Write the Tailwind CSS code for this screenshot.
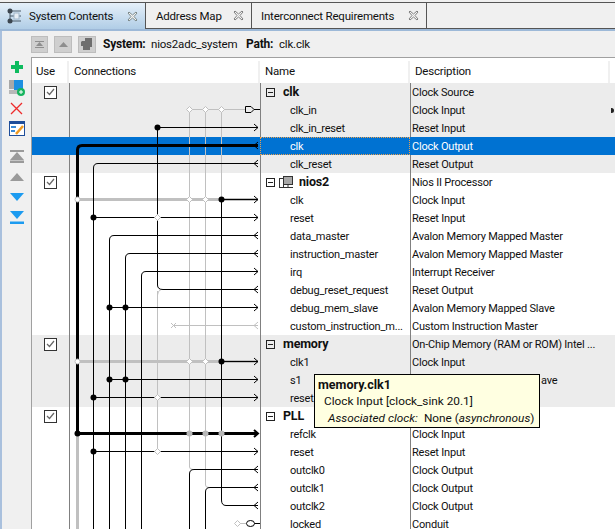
<!DOCTYPE html>
<html>
<head>
<title>System Contents</title>
<script src="https://cdn.jsdelivr.net/npm/@tailwindcss/browser@4"></script>
</head>
<body>
<div class="relative w-[615px] h-[529px] overflow-hidden bg-[#f0f0f0] text-[11px] tracking-[-0.2px] leading-[18px] text-[#101010] font-['Roboto','Open_Sans',sans-serif]">

  <!-- Tabs -->
  <div class="flex h-[31px] pt-[2px] border-b-2 border-[#9db9d8] whitespace-nowrap text-[11.5px]">
    <div class="flex items-center w-[146px] h-[27px] pl-[7px] bg-gradient-to-b from-[#e6f0f9] to-[#b0cde6] border-t border-r border-[#555]">
      <svg width="16" height="16" viewBox="0 0 16 16" class="shrink-0">
        <path d="M3 3V13M3 3H14M3 8H14M3 13H14" stroke="#4b5b68" fill="none"/>
        <circle cx="3" cy="3" r="2.500" fill="#3c4650"/><circle cx="3" cy="13" r="2.500" fill="#3c4650"/>
        <rect x="7" y="5" width="5" height="6" fill="#e8eef5" stroke="#9fb4c8"/>
      </svg>
      <span class="ml-[6px] w-[98px]">System Contents</span>
      <svg width="11" height="11" viewBox="0 0 11 11"><path d="M2 1 5.500 4 9 1 10 2 7 5.500 10 9 9 10 5.500 7 2 10 1 9 4 5.500 1 2Z" fill="#f4f4f4" stroke="#7d8a8a"/></svg>
    </div>
    <div class="flex items-center w-[106px] h-[27px] pl-[10px] border-t border-r border-b border-[#555]">
      <span class="w-[77px]">Address Map</span>
      <svg width="11" height="11" viewBox="0 0 11 11"><path d="M2 1 5.500 4 9 1 10 2 7 5.500 10 9 9 10 5.500 7 2 10 1 9 4 5.500 1 2Z" fill="#f4f4f4" stroke="#808080"/></svg>
    </div>
    <div class="flex items-center w-[175px] h-[27px] pl-[9px] border-t border-r border-b border-[#555]">
      <span class="w-[147px]">Interconnect Requirements</span>
      <svg width="11" height="11" viewBox="0 0 11 11"><path d="M2 1 5.500 4 9 1 10 2 7 5.500 10 9 9 10 5.500 7 2 10 1 9 4 5.500 1 2Z" fill="#f4f4f4" stroke="#808080"/></svg>
    </div>
    <div class="flex-1 border-t border-b border-[#555] h-[27px]"></div>
  </div>

  <div class="flex h-[498px] border-l-2 border-[#a9c0dd]">
    <!-- Left toolbar -->
    <div class="w-[29px] shrink-0 flex flex-col items-center pt-[29px]">
      <svg width="14" height="14" viewBox="0 0 14 14" class="ml-[1px]"><path d="M5 1H9V5H13V9H9V13H5V9H1V5H5Z" fill="#0dbb5e"/></svg>
      <svg width="18" height="18" viewBox="0 0 18 18" class="mt-[5px]">
        <rect x="1" y="1" width="5" height="9" fill="#a8a8a8"/><rect x="1" y="11" width="11" height="4" fill="#b8b8b8"/>
        <rect x="6" y="1" width="9" height="10" fill="#1d8fe0"/>
        <circle cx="13" cy="13" r="4" fill="#17b45e"/><path d="M11 13H15M13 11V15" stroke="#fff"/>
      </svg>
      <svg width="13" height="13" viewBox="0 0 13 13" class="mt-[5px]"><path d="M1 1 12 12M12 1 1 12" stroke="#ee2a2a" stroke-width="1.300"/></svg>
      <svg width="16" height="15" viewBox="0 0 16 15" class="mt-[6px]">
        <rect x="0.500" y="0.500" width="15" height="14" fill="#fff" stroke="#1f4e9a"/><rect x="0" y="0" width="16" height="3" fill="#1f4e9a"/>
        <path d="M2 6H7M2 10H6" stroke="#3a8ad6" stroke-width="2"/>
        <path d="M7 13 14 5" stroke="#f09a20" stroke-width="2.500"/>
      </svg>
      <svg width="14" height="13" viewBox="0 0 14 13" class="mt-[14px]"><path d="M0 0H14V2H0ZM7 2 14 10H0ZM0 10.500H14V13H0Z" fill="#9a9a9a"/></svg>
      <svg width="14" height="8" viewBox="0 0 14 8" class="mt-[10px]"><path d="M7 0 14 8H0Z" fill="#9a9a9a"/></svg>
      <svg width="14" height="8" viewBox="0 0 14 8" class="mt-[12px]"><path d="M0 0H14L7 8Z" fill="#1c9bf0"/></svg>
      <svg width="14" height="13" viewBox="0 0 14 13" class="mt-[10px]"><path d="M0 0H14L7 8ZM0 10.500H14V13H0Z" fill="#1c9bf0"/></svg>
    </div>

    <!-- Main -->
    <div class="flex-1 min-w-0">
      <!-- Path bar -->
      <div class="flex items-center h-[26px] whitespace-nowrap">
        <div class="w-[17px] h-[17px] flex items-center justify-center bg-[#cfcfcf] border border-[#bdbdbd]"><svg width="9" height="7" viewBox="0 0 9 7"><path d="M0 0H9V1H0ZM4.500 1 8 5H1ZM0 6H9V7H0Z" fill="#8e8e8e"/></svg></div>
        <div class="w-[18px] h-[17px] ml-[6px] flex items-center justify-center bg-[#cfcfcf] border border-[#bdbdbd]"><svg width="9" height="5" viewBox="0 0 9 5"><path d="M4.500 0 9 5H0Z" fill="#8e8e8e"/></svg></div>
        <div class="w-[18px] h-[17px] ml-[6px] flex items-center justify-center bg-[#cfcfcf] border border-[#bdbdbd]"><svg width="14" height="14" viewBox="0 0 14 14"><path d="M2 4H5V1H12V10H10V13H3V9H1V5Z" fill="#6e6e6e"/></svg></div>
        <span class="ml-[5px] w-[50px] font-bold text-[12px] pl-[2px]">System:</span>
        <span class="w-[95px] text-[11.5px]">nios2adc_system</span>
        <span class="w-[33px] font-bold text-[12px]">Path:</span>
        <span class="text-[11.5px]">clk.clk</span>
      </div>

      <!-- Table -->
      <div class="relative border-t border-l border-[#a0a0a0] leading-[20px]">
        <div class="flex h-[25px] bg-white pt-[3px] text-[11.5px]">
          <div class="w-[37px] pl-[4px] border-r-2 border-[#f0f0f0]">Use</div>
          <div class="w-[191px] pl-[5px] border-r-2 border-[#f0f0f0]">Connections</div>
          <div class="w-[150px] pl-[5px] border-r-2 border-[#f0f0f0]">Name</div>
          <div class="w-[200px] pl-[5px] border-r-2 border-[#f0f0f0]">Description</div>
        </div>

        <div class="relative">
          <!-- clk group -->
          <div class="bg-[#ececec]">
            <div class="flex h-[18px]">
              <div class="w-[37px] flex justify-center items-center"><span class="w-[13px] h-[13px] border border-[#333] bg-white flex items-center justify-center"><svg width="9" height="8" viewBox="0 0 9 8"><path d="M1 4 3.500 6.500 8 1" stroke="#666" stroke-width="1.200" fill="none"/></svg></span></div>
              <div class="w-[191px] border-l border-[#808080]"></div>
              <div class="w-[150px] border-l border-[#808080] flex items-center pl-[5px]"><span class="w-[9px] h-[9px] border border-[#222] flex items-center justify-center"><span class="w-[5px] h-px bg-[#222]"></span></span><span class="ml-[8px] font-bold text-[12.5px]">clk</span></div>
              <div class="w-[200px] border-l border-[#808080] pl-px">Clock Source</div>
            </div>
            <div class="flex h-[18px]"><div class="w-[37px]"></div><div class="w-[191px] border-l border-[#808080]"></div><div class="w-[150px] border-l border-[#808080] pl-[29px]">clk_in</div><div class="w-[200px] border-l border-[#808080] pl-px">Clock Input</div></div>
            <div class="flex h-[18px]"><div class="w-[37px]"></div><div class="w-[191px] border-l border-[#808080]"></div><div class="w-[150px] border-l border-[#808080] pl-[29px]">clk_in_reset</div><div class="w-[200px] border-l border-[#808080] pl-px">Reset Input</div></div>
            <div class="flex h-[18px] bg-[#0072d2] text-white"><div class="w-[37px]"></div><div class="w-[191px]"></div><div class="w-[150px] border border-dotted border-[#e8a050] pl-[29px] leading-[18px]">clk</div><div class="w-[200px] pl-[2px]">Clock Output</div></div>
            <div class="flex h-[18px]"><div class="w-[37px]"></div><div class="w-[191px] border-l border-[#808080]"></div><div class="w-[150px] border-l border-[#808080] pl-[29px]">clk_reset</div><div class="w-[200px] border-l border-[#808080] pl-px">Reset Output</div></div>
          </div>

          <!-- nios2 group -->
          <div class="bg-white">
            <div class="flex h-[18px]">
              <div class="w-[37px] flex justify-center items-center"><span class="w-[13px] h-[13px] border border-[#333] bg-white flex items-center justify-center"><svg width="9" height="8" viewBox="0 0 9 8"><path d="M1 4 3.500 6.500 8 1" stroke="#666" stroke-width="1.200" fill="none"/></svg></span></div>
              <div class="w-[191px] border-l border-[#808080]"></div>
              <div class="w-[150px] border-l border-[#808080] flex items-center pl-[5px]"><span class="w-[9px] h-[9px] border border-[#222] flex items-center justify-center"><span class="w-[5px] h-px bg-[#222]"></span></span><svg width="15" height="15" viewBox="0 0 15 15" class="ml-[4px]"><rect x="0.500" y="3.500" width="4" height="9" fill="#fff" stroke="#333"/><rect x="4.500" y="1.500" width="9" height="8" fill="#a8a8a8" stroke="#333"/><path d="M9 10V12M5 12.500H14" stroke="#333"/></svg><span class="ml-[5px] font-bold text-[12.5px]">nios2</span></div>
              <div class="w-[200px] border-l border-[#808080] pl-px">Nios II Processor</div>
            </div>
            <div class="flex h-[18px]"><div class="w-[37px]"></div><div class="w-[191px] border-l border-[#808080]"></div><div class="w-[150px] border-l border-[#808080] pl-[29px]">clk</div><div class="w-[200px] border-l border-[#808080] pl-px">Clock Input</div></div>
            <div class="flex h-[18px]"><div class="w-[37px]"></div><div class="w-[191px] border-l border-[#808080]"></div><div class="w-[150px] border-l border-[#808080] pl-[29px]">reset</div><div class="w-[200px] border-l border-[#808080] pl-px">Reset Input</div></div>
            <div class="flex h-[18px]"><div class="w-[37px]"></div><div class="w-[191px] border-l border-[#808080]"></div><div class="w-[150px] border-l border-[#808080] pl-[29px]">data_master</div><div class="w-[200px] border-l border-[#808080] pl-px">Avalon Memory Mapped Master</div></div>
            <div class="flex h-[18px]"><div class="w-[37px]"></div><div class="w-[191px] border-l border-[#808080]"></div><div class="w-[150px] border-l border-[#808080] pl-[29px]">instruction_master</div><div class="w-[200px] border-l border-[#808080] pl-px">Avalon Memory Mapped Master</div></div>
            <div class="flex h-[18px]"><div class="w-[37px]"></div><div class="w-[191px] border-l border-[#808080]"></div><div class="w-[150px] border-l border-[#808080] pl-[29px]">irq</div><div class="w-[200px] border-l border-[#808080] pl-px">Interrupt Receiver</div></div>
            <div class="flex h-[18px]"><div class="w-[37px]"></div><div class="w-[191px] border-l border-[#808080]"></div><div class="w-[150px] border-l border-[#808080] pl-[29px]">debug_reset_request</div><div class="w-[200px] border-l border-[#808080] pl-px">Reset Output</div></div>
            <div class="flex h-[18px]"><div class="w-[37px]"></div><div class="w-[191px] border-l border-[#808080]"></div><div class="w-[150px] border-l border-[#808080] pl-[29px]">debug_mem_slave</div><div class="w-[200px] border-l border-[#808080] pl-px">Avalon Memory Mapped Slave</div></div>
            <div class="flex h-[18px]"><div class="w-[37px]"></div><div class="w-[191px] border-l border-[#808080]"></div><div class="w-[150px] border-l border-[#808080] pl-[29px] whitespace-nowrap">custom_instruction_m...</div><div class="w-[200px] border-l border-[#808080] pl-px">Custom Instruction Master</div></div>
          </div>

          <!-- memory group -->
          <div class="bg-[#ececec]">
            <div class="flex h-[18px]">
              <div class="w-[37px] flex justify-center items-center"><span class="w-[13px] h-[13px] border border-[#333] bg-white flex items-center justify-center"><svg width="9" height="8" viewBox="0 0 9 8"><path d="M1 4 3.500 6.500 8 1" stroke="#666" stroke-width="1.200" fill="none"/></svg></span></div>
              <div class="w-[191px] border-l border-[#808080]"></div>
              <div class="w-[150px] border-l border-[#808080] flex items-center pl-[5px]"><span class="w-[9px] h-[9px] border border-[#222] flex items-center justify-center"><span class="w-[5px] h-px bg-[#222]"></span></span><span class="ml-[8px] font-bold text-[12.5px]">memory</span></div>
              <div class="w-[200px] border-l border-[#808080] pl-px whitespace-nowrap">On-Chip Memory (RAM or ROM) Intel ...</div>
            </div>
            <div class="flex h-[18px]"><div class="w-[37px]"></div><div class="w-[191px] border-l border-[#808080]"></div><div class="w-[150px] border-l border-[#808080] pl-[29px]">clk1</div><div class="w-[200px] border-l border-[#808080] pl-px">Clock Input</div></div>
            <div class="flex h-[18px]"><div class="w-[37px]"></div><div class="w-[191px] border-l border-[#808080]"></div><div class="w-[150px] border-l border-[#808080] pl-[29px]">s1</div><div class="w-[200px] border-l border-[#808080] pl-[130px] whitespace-nowrap">ave</div></div>
            <div class="flex h-[18px]"><div class="w-[37px]"></div><div class="w-[191px] border-l border-[#808080]"></div><div class="w-[150px] border-l border-[#808080] pl-[29px]">reset</div><div class="w-[200px] border-l border-[#808080]"></div></div>
          </div>

          <!-- PLL group -->
          <div class="bg-white">
            <div class="flex h-[18px]">
              <div class="w-[37px] flex justify-center items-center"><span class="w-[13px] h-[13px] border border-[#333] bg-white flex items-center justify-center"><svg width="9" height="8" viewBox="0 0 9 8"><path d="M1 4 3.500 6.500 8 1" stroke="#666" stroke-width="1.200" fill="none"/></svg></span></div>
              <div class="w-[191px] border-l border-[#808080]"></div>
              <div class="w-[150px] border-l border-[#808080] flex items-center pl-[5px]"><span class="w-[9px] h-[9px] border border-[#222] flex items-center justify-center"><span class="w-[5px] h-px bg-[#222]"></span></span><span class="ml-[8px] font-bold text-[12.5px]">PLL</span></div>
              <div class="w-[200px] border-l border-[#808080]"></div>
            </div>
            <div class="flex h-[18px]"><div class="w-[37px]"></div><div class="w-[191px] border-l border-[#808080]"></div><div class="w-[150px] border-l border-[#808080] pl-[29px]">refclk</div><div class="w-[200px] border-l border-[#808080] pl-px">Clock Input</div></div>
            <div class="flex h-[18px]"><div class="w-[37px]"></div><div class="w-[191px] border-l border-[#808080]"></div><div class="w-[150px] border-l border-[#808080] pl-[29px]">reset</div><div class="w-[200px] border-l border-[#808080] pl-px">Reset Input</div></div>
            <div class="flex h-[18px]"><div class="w-[37px]"></div><div class="w-[191px] border-l border-[#808080]"></div><div class="w-[150px] border-l border-[#808080] pl-[29px]">outclk0</div><div class="w-[200px] border-l border-[#808080] pl-px">Clock Output</div></div>
            <div class="flex h-[18px]"><div class="w-[37px]"></div><div class="w-[191px] border-l border-[#808080]"></div><div class="w-[150px] border-l border-[#808080] pl-[29px]">outclk1</div><div class="w-[200px] border-l border-[#808080] pl-px">Clock Output</div></div>
            <div class="flex h-[18px]"><div class="w-[37px]"></div><div class="w-[191px] border-l border-[#808080]"></div><div class="w-[150px] border-l border-[#808080] pl-[29px]">outclk2</div><div class="w-[200px] border-l border-[#808080] pl-px">Clock Output</div></div>
            <div class="flex h-[18px]"><div class="w-[37px]"></div><div class="w-[191px] border-l border-[#808080]"></div><div class="w-[150px] border-l border-[#808080] pl-[29px]">locked</div><div class="w-[200px] border-l border-[#808080] pl-px">Conduit</div></div>
          </div>

          <!-- connection wires, coordinates are page pixels -->
          <svg class="absolute left-[37px] top-0" width="192" height="450" viewBox="69 83 192 450" fill="none">
            <!-- gray wires -->
            <g stroke="#c0c0c0">
              <path d="M189.500 109.500V467Q189.500 469.500 193 469.500M205.500 109.500V485Q205.500 487.500 209 487.500M221.500 109.500V199.500M157.500 291V451.500"/>
              <path d="M189.500 109.500H245"/>
              <path d="M77.500 199.500H258M77.500 361.500H258M77.500 433.500V529" stroke-width="3"/>
              <path d="M157.500 295Q157.500 291 161 289.500"/>
              <path d="M173.500 325.500H258M258 322 254 325.500 258 329"/>
              <path d="M171 323 176 328M176 323 171 328" />
            </g>
            <!-- black wires -->
            <g stroke="#000">
              <path d="M157.500 127.500V285Q157.500 289.500 163 289.500H258"/>
              <path d="M157.500 127.500H258M93.500 529V168Q93.500 163.500 98 163.500H258"/>
              <path d="M109.500 529V240Q109.500 235.500 114 235.500H258M125.500 529V258Q125.500 253.500 130 253.500H258M141.500 529V276Q141.500 271.500 146 271.500H258"/>
              <path d="M221.500 199.500V500Q221.500 505.500 226 505.500H258"/>
              <path d="M221.500 199.500H258M221.500 361.500H258M93.500 217.500H258M93.500 397.500H258M93.500 451.500H258M109.500 307.500H258M109.500 379.500H258"/>
              <path d="M189.500 529V474Q189.500 469.500 194 469.500H258M205.500 529V492Q205.500 487.500 210 487.500H258"/>
              <path d="M77.500 433.500H258" stroke-width="3"/>
              <path d="M77.500 433.500V150Q77.500 145.500 82 145.500H258" stroke-width="3"/>
              <!-- arrows in -->
              <path d="M258 142 254 145.500 258 149M258 160 254 163.500 258 167M258 232 254 235.500 258 239M258 250 254 253.500 258 257M258 286 254 289.500 258 293M258 466 254 469.500 258 473M258 484 254 487.500 258 491M258 502 254 505.500 258 509"/>
              <!-- arrows out -->
              <path d="M254 124 258 127.500 254 131M254 196 258 199.500 254 203M254 214 258 217.500 254 221M254 268 258 271.500 254 275M254 304 258 307.500 254 311M254 358 258 361.500 254 365M254 376 258 379.500 254 383M254 394 258 397.500 254 401M254 448 258 451.500 254 455"/>
              <path d="M254 430 258 433.500 254 437" stroke-width="2"/>
              <!-- clock source -->
              <path d="M245.500 106.500H251L254 109.500 251 112.500H245.500ZM254 109.500H260"/>
              <!-- locked conduit -->
              <ellipse cx="250.500" cy="523.500" rx="4" ry="3"/>
              <path d="M254.500 523.500H260"/>
            </g>
            <path d="M238 523.500H246" stroke="#c0c0c0"/>
            <!-- black junction dots -->
            <g fill="#000">
              <circle cx="157.500" cy="127.500" r="3"/><circle cx="221.500" cy="199.500" r="3"/><circle cx="93.500" cy="217.500" r="3"/>
              <circle cx="109.500" cy="307.500" r="3"/><circle cx="125.500" cy="307.500" r="3"/><circle cx="221.500" cy="361.500" r="3"/>
              <circle cx="109.500" cy="379.500" r="3"/><circle cx="125.500" cy="379.500" r="3"/><circle cx="93.500" cy="397.500" r="3"/>
              <circle cx="77.500" cy="433.500" r="3"/><circle cx="93.500" cy="451.500" r="3"/>
            </g>
            <!-- gray junction diamonds -->
            <g fill="#fff" stroke="#c0c0c0">
              <path d="M189.500 106.500 192.500 109.500 189.500 112.500 186.500 109.500ZM205.500 106.500 208.500 109.500 205.500 112.500 202.500 109.500ZM221.500 106.500 224.500 109.500 221.500 112.500 218.500 109.500Z"/>
              <path d="M189.500 196.500 192.500 199.500 189.500 202.500 186.500 199.500ZM205.500 196.500 208.500 199.500 205.500 202.500 202.500 199.500ZM157.500 214.500 160.500 217.500 157.500 220.500 154.500 217.500Z"/>
              <path d="M189.500 358.500 192.500 361.500 189.500 364.500 186.500 361.500ZM205.500 358.500 208.500 361.500 205.500 364.500 202.500 361.500ZM157.500 394.500 160.500 397.500 157.500 400.500 154.500 397.500Z"/>
              <path d="M157.500 448.500 160.500 451.500 157.500 454.500 154.500 451.500ZM237.500 520.500 240.500 523.500 237.500 526.500 234.500 523.500Z"/>
              <circle cx="77.500" cy="199.500" r="2.500"/><circle cx="77.500" cy="361.500" r="2.500"/>
            </g>
            <g fill="#b8b8b8"><circle cx="189.500" cy="433.500" r="3"/><circle cx="205.500" cy="433.500" r="3"/><circle cx="221.500" cy="433.500" r="3"/></g>
          </svg>
        </div>
      </div>
    </div>
  </div>

  <!-- Next column peeking in -->
  <div class="absolute left-[611px] top-[108px] w-[3px] h-[5px] rounded-r-full bg-[#222]"></div>

  <!-- Tooltip -->
  <div class="absolute left-[314px] top-[374px] w-[226px] h-[54px] bg-[#ffffe1] border border-black pl-[3px] pt-px leading-[17px] text-[11.8px] tracking-normal whitespace-nowrap">
    <div class="font-bold text-[12.5px]">memory.clk1</div>
    <div class="pl-[6px]">Clock Input [clock_sink 20.1]</div>
    <div class="pl-[10px]"><i>Associated clock:</i><span class="ml-[6px]">None (<i>asynchronous</i>)</span></div>
  </div>
</div>
</body>
</html>
